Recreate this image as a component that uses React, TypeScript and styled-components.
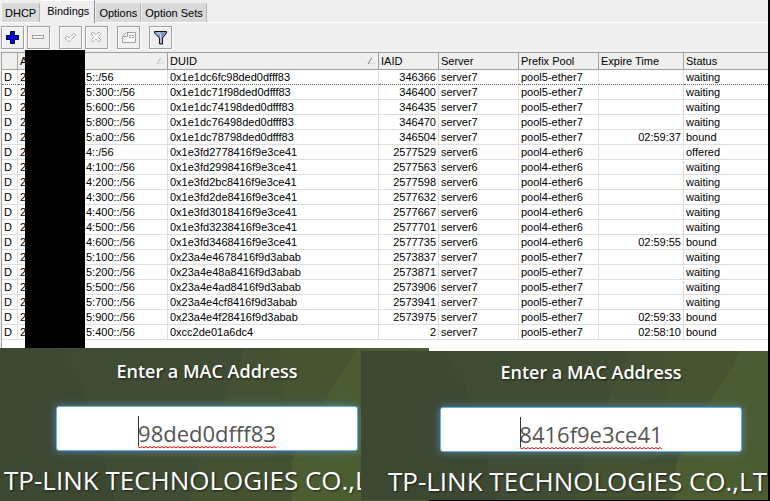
import React from "react";
import styled, { createGlobalStyle } from "styled-components";

const Global = createGlobalStyle`
  * { box-sizing: border-box; }
  body { margin: 0; background: #000; overflow: hidden; }
`;

const UI_FONT = '"Liberation Sans", Arial, sans-serif';
const WEB_FONT = '"Open Sans", "Noto Sans", sans-serif';

const Page = styled.main`
  display: flex;
  flex-direction: column;
`;

const Window = styled.section`
  position: relative;
  margin-right: 2px;
  background: #efefef;
  color: #000;
  font: 11px/15px ${UI_FONT};
`;

const Tabs = styled.div`
  display: flex;
  align-items: flex-end;
  gap: 1px;
  height: 23px;
  padding-left: 2px;
  border-bottom: 1px solid #fff;
`;

const Tab = styled.button<{ $active?: boolean }>`
  height: ${(p) => (p.$active ? 23 : 19)}px;
  margin-bottom: ${(p) => (p.$active ? -1 : 0)}px;
  padding: ${(p) => (p.$active ? "0 5px 2px 6px" : "0 3px")};
  border: 0;
  border-right: 1px solid ${(p) => (p.$active ? "#8a8a8a" : "#b4b4b4")};
  border-top: 1px solid ${(p) => (p.$active ? "#fff" : "#d9d9d9")};
  background: ${(p) => (p.$active ? "#efefef" : "#d9d9d9")};
  color: #000;
  font: inherit;
  white-space: nowrap;
`;

const Toolbar = styled.div`
  display: flex;
  gap: 3px;
  height: 29px;
  padding: 3px 1px;
`;

const ToolButton = styled.button<{ $apart?: boolean }>`
  display: grid;
  place-items: center;
  width: 23px;
  height: 23px;
  margin-left: ${(p) => (p.$apart ? 6 : 0)}px;
  padding: 0;
  border: 1px solid #a0a0a0;
  background: #efefef;
  box-shadow: inset 1px 1px #fff, 1px 1px #fff;
`;

const Table = styled.table`
  width: 100%;
  table-layout: fixed;
  border-collapse: separate;
  border-spacing: 0;
  border-left: 1px solid #a0a0a0;
  background: #fff;
`;

const TableFrame = styled.div`
  padding-left: 1px;
`;

const Col = styled.col<{ $w?: number }>`
  width: ${(p) => (p.$w ? `${p.$w}px` : "auto")};
`;

const HeadCell = styled.th`
  height: 18px;
  padding: 0 2px;
  border-top: 1px solid #a0a0a0;
  border-bottom: 1px solid #a0a0a0;
  border-right: 1px solid #a0a0a0;
  background: #efefef;
  font-weight: 400;
  text-align: left;
  white-space: nowrap;
  &:last-child { border-right: 0; }
`;

const HeadLabel = styled.span`
  display: flex;
  align-items: center;
  justify-content: space-between;
`;

const Row = styled.tr<{ $focused?: boolean }>`
  & > td { border-bottom: 1px ${(p) => (p.$focused ? "dotted #666" : "solid #dedede")}; }
`;

const Cell = styled.td<{ $right?: boolean }>`
  height: 15px;
  padding: 0 2px;
  border-right: 1px solid #dedede;
  line-height: 14px;
  text-align: ${(p) => (p.$right ? "right" : "left")};
  white-space: nowrap;
  &:last-child { border-right: 0; }
`;

const Prefix = styled.span`
  display: grid;
  grid-template-columns: 66px 1fr;
`;

const Redaction = styled.div`
  position: absolute;
  top: 50px;
  bottom: 0;
  left: 25px;
  width: 60px;
  background: #000;
`;

const Filler = styled.div`
  height: 8px;
  border-left: 1px solid #a0a0a0;
  background: #fff;
`;

const Lookups = styled.div`
  display: flex;
  margin-right: 2px;
  background: linear-gradient(#fff, #fff) top / 100% 3px no-repeat;
`;

const Panel = styled.form<{ $second?: boolean }>`
  position: relative;
  flex: 0 0 ${(p) => (p.$second ? "53%" : "55.9%")};
  min-width: 0;
  height: ${(p) => (p.$second ? 149 : 153)}px;
  margin-top: ${(p) => (p.$second ? 3 : 0)}px;
  margin-left: ${(p) => (p.$second ? "-8.9%" : "0")};
  padding: ${(p) => (p.$second ? "9px 0 0 23px" : "11px 0 0")};
  overflow: hidden;
  background: #3d4833;
  color: #fff;
  font-family: ${WEB_FONT};
  text-shadow: 1px 1px 2px rgba(0, 0, 0, 0.6);
`;

const Backdrop = styled.svg<{ $second?: boolean }>`
  position: absolute;
  top: 0;
  left: ${(p) => (p.$second ? 23 : 0)}px;
  width: 429px;
  height: 153px;
`;

const PanelBody = styled.div`
  position: relative;
  display: flex;
  flex-direction: column;
  align-items: center;
  width: 414px;
`;

const PanelLabel = styled.label`
  font-size: 18px;
  line-height: 24px;
  font-weight: 600;
`;

const MacBox = styled.div`
  position: relative;
  width: 302px;
  margin-top: 23px;
`;

const MacInput = styled.input`
  display: block;
  width: 100%;
  height: 45px;
  padding: 9px 0 0;
  border: 1px solid #66afe9;
  border-radius: 3px;
  outline: 0;
  background: #fff;
  box-shadow: 0 0 8px rgba(102, 175, 233, 0.6);
  color: #555;
  font: 22px/34px ${WEB_FONT};
  text-align: center;
`;

const Squiggle = styled.svg<{ $w: number }>`
  position: absolute;
  left: 50%;
  bottom: 1px;
  width: ${(p) => p.$w}px;
  height: 34px;
  margin-left: -${(p) => p.$w / 2}px;
  pointer-events: none;
`;

const Vendor = styled.p`
  align-self: flex-start;
  margin: 11px 0 0 4px;
  font-size: 26px;
  line-height: 36px;
  white-space: nowrap;
`;

type Binding = [string, string, string, string, string, string, string];

const bindings: Binding[] = [
  ["5::/56", "0x1e1dc6fc98ded0dfff83", "346366", "server7", "pool5-ether7", "", "waiting"],
  ["5:300::/56", "0x1e1dc71f98ded0dfff83", "346400", "server7", "pool5-ether7", "", "waiting"],
  ["5:600::/56", "0x1e1dc74198ded0dfff83", "346435", "server7", "pool5-ether7", "", "waiting"],
  ["5:800::/56", "0x1e1dc76498ded0dfff83", "346470", "server7", "pool5-ether7", "", "waiting"],
  ["5:a00::/56", "0x1e1dc78798ded0dfff83", "346504", "server7", "pool5-ether7", "02:59:37", "bound"],
  ["4::/56", "0x1e3fd2778416f9e3ce41", "2577529", "server6", "pool4-ether6", "", "offered"],
  ["4:100::/56", "0x1e3fd2998416f9e3ce41", "2577563", "server6", "pool4-ether6", "", "waiting"],
  ["4:200::/56", "0x1e3fd2bc8416f9e3ce41", "2577598", "server6", "pool4-ether6", "", "waiting"],
  ["4:300::/56", "0x1e3fd2de8416f9e3ce41", "2577632", "server6", "pool4-ether6", "", "waiting"],
  ["4:400::/56", "0x1e3fd3018416f9e3ce41", "2577667", "server6", "pool4-ether6", "", "waiting"],
  ["4:500::/56", "0x1e3fd3238416f9e3ce41", "2577701", "server6", "pool4-ether6", "", "waiting"],
  ["4:600::/56", "0x1e3fd3468416f9e3ce41", "2577735", "server6", "pool4-ether6", "02:59:55", "bound"],
  ["5:100::/56", "0x23a4e4678416f9d3abab", "2573837", "server7", "pool5-ether7", "", "waiting"],
  ["5:200::/56", "0x23a4e48a8416f9d3abab", "2573871", "server7", "pool5-ether7", "", "waiting"],
  ["5:500::/56", "0x23a4e4ad8416f9d3abab", "2573906", "server7", "pool5-ether7", "", "waiting"],
  ["5:700::/56", "0x23a4e4cf8416f9d3abab", "2573941", "server7", "pool5-ether7", "", "waiting"],
  ["5:900::/56", "0x23a4e4f28416f9d3abab", "2573975", "server7", "pool5-ether7", "02:59:33", "bound"],
  ["5:400::/56", "0xcc2de01a6dc4", "2", "server7", "pool5-ether7", "02:58:10", "bound"],
];

function SortMark({ color }: { color: string }) {
  return (
    <svg width="9" height="8" viewBox="0 0 9 8" fill="none">
      <path d="M4.5 1 8 6.5H1" stroke="#dcdcdc" />
      <path d="M1 7 4.5 1" stroke={color} />
    </svg>
  );
}

function MacLookup({ id, mac, vendor, textWidth, second }: { id: string; mac: string; vendor: string; textWidth: number; second?: boolean }) {
  let wave = "M0 30.5";
  for (let x = 2; x <= textWidth; x += 2) wave += ` L${x} ${x % 4 ? 32 : 30.5}`;
  return (
    <Panel $second={second} onSubmit={(e) => e.preventDefault()}>
      <Backdrop $second={second} viewBox="0 0 429 153" aria-hidden="true">
        <path d="M60 0H429V153H115L80 30Z" fill="#404c34" />
        <path d="M0 0H60L80 30L0 75Z" fill="#3e4933" />
        <path d="M60 0H140L80 35Z" fill="#3f4b34" />
        <path d="M245 0H280L284 100 190 153 200 110 222 55Z" fill="#435033" />
        <path d="M280 0H357L320 60 284 100Z" fill="#465432" />
        <path d="M222 55 245 0H280L284 60Z" fill="#445233" />
        <path d="M190 153 200 115 292 112V153Z" fill="#445232" />
        <path d="M357 0H429V153H292V112L320 60Z" fill="#4b5b32" />
        <path d="M292 115 361 100V153H292Z" fill="#4c5d32" />
      </Backdrop>
      <PanelBody>
        <PanelLabel htmlFor={id}>Enter a MAC Address</PanelLabel>
        <MacBox>
          <MacInput id={id} type="text" defaultValue={mac} />
          <Squiggle $w={textWidth} aria-hidden="true">
            <path d={wave} stroke="#f00" fill="none" />
            <path d="M0.5 0V30" stroke="#333" />
          </Squiggle>
        </MacBox>
        <Vendor>{vendor}</Vendor>
      </PanelBody>
    </Panel>
  );
}

export default function App() {
  return (
    <Page>
      <Global />
      <Window>
        <Tabs role="tablist">
          <Tab role="tab">DHCP</Tab>
          <Tab role="tab" $active aria-selected="true">Bindings</Tab>
          <Tab role="tab">Options</Tab>
          <Tab role="tab">Option Sets</Tab>
        </Tabs>
        <Toolbar>
          <ToolButton aria-label="Add">
            <svg width="13" height="13"><path d="M4.5 0.5H8.5V4.5H12.5V8.5H8.5V12.5H4.5V8.5H0.5V4.5H4.5Z" fill="#00f" stroke="#000" /></svg>
          </ToolButton>
          <ToolButton aria-label="Remove">
            <svg width="13" height="13"><rect x="0.5" y="4.5" width="11" height="3" fill="#f6f6f6" stroke="#a0a0a0" /></svg>
          </ToolButton>
          <ToolButton $apart aria-label="Enable">
            <svg width="13" height="13" fill="#f6f6f6" stroke="#a0a0a0"><path d="M1 7 3 5 5 7 10 2 12 4 5 11Z" strokeDasharray="1.5 0.5" /></svg>
          </ToolButton>
          <ToolButton aria-label="Disable">
            <svg width="13" height="13" fill="#f6f6f6" stroke="#a0a0a0"><path d="M1 3 3 1 6 4 9 1 11 3 8 6 11 9 9 11 6 8 3 11 1 9 4 6Z" strokeDasharray="1.5 0.5" /></svg>
          </ToolButton>
          <ToolButton $apart aria-label="Comment">
            <svg width="14" height="11" fill="#f6f6f6" stroke="#a0a0a0">
              <path d="M0.5 4.5 4.5 0.5H13.5V10.5H0.5Z" />
              <path d="M1 4.5H5.5V1M7 3.5H9M10 3.5H12M7 5.5H9M10 5.5H12" fill="none" />
            </svg>
          </ToolButton>
          <ToolButton $apart aria-label="Filter">
            <svg width="13" height="14">
              <path d="M0.5 0.5H12.5V2L8.5 7V13H5.5V7L0.5 2Z" fill="#8798c4" stroke="#111" />
              <path d="M3 2H6L7 7V12" fill="none" stroke="#d4dcf2" />
            </svg>
          </ToolButton>
        </Toolbar>
        <TableFrame>
          <Table>
            <colgroup>
              <Col $w={16} /><Col $w={150} /><Col $w={211} /><Col $w={60} /><Col $w={80} /><Col $w={80} /><Col $w={85} /><Col />
            </colgroup>
            <thead>
              <tr>
                <HeadCell aria-label="Flags" />
                <HeadCell><HeadLabel>Address<SortMark color="#bbb" /></HeadLabel></HeadCell>
                <HeadCell><HeadLabel>DUID<SortMark color="#777" /></HeadLabel></HeadCell>
                <HeadCell>IAID</HeadCell>
                <HeadCell>Server</HeadCell>
                <HeadCell>Prefix Pool</HeadCell>
                <HeadCell>Expire Time</HeadCell>
                <HeadCell>Status</HeadCell>
              </tr>
            </thead>
            <tbody>
              {bindings.map(([tail, duid, iaid, server, pool, expire, status], i) => (
                <Row key={duid} $focused={i === 0}>
                  <Cell>D</Cell>
                  <Cell><Prefix><span>2</span><span>{tail}</span></Prefix></Cell>
                  <Cell>{duid}</Cell>
                  <Cell $right>{iaid}</Cell>
                  <Cell>{server}</Cell>
                  <Cell>{pool}</Cell>
                  <Cell $right>{expire}</Cell>
                  <Cell>{status}</Cell>
                </Row>
              ))}
            </tbody>
          </Table>
          <Filler />
        </TableFrame>
        <Redaction />
      </Window>
      <Lookups>
        <MacLookup id="mac-a" mac="98ded0dfff83" vendor="TP-LINK TECHNOLOGIES CO.,L" textWidth={138} />
        <MacLookup id="mac-b" mac="8416f9e3ce41" vendor="TP-LINK TECHNOLOGIES CO.,LT" textWidth={142} second />
      </Lookups>
    </Page>
  );
}
